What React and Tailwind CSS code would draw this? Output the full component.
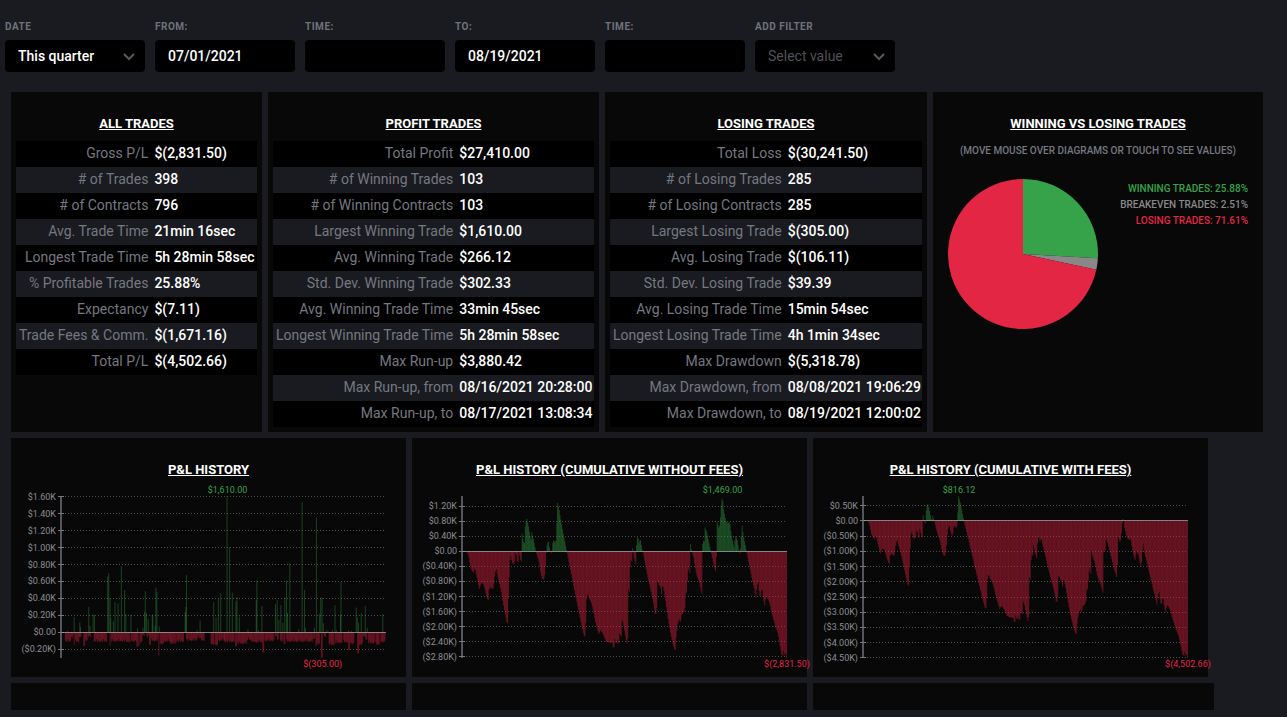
import React, { useState } from 'react';

const allTrades = [
    ['Gross P/L', '$(2,831.50)'],
    ['# of Trades', '398'],
    ['# of Contracts', '796'],
    ['Avg. Trade Time', '21min 16sec'],
    ['Longest Trade Time', '5h 28min 58sec'],
    ['% Profitable Trades', '25.88%'],
    ['Expectancy', '$(7.11)'],
    ['Trade Fees & Comm.', '$(1,671.16)'],
    ['Total P/L', '$(4,502.66)'],
];

const profitTrades = [
    ['Total Profit', '$27,410.00'],
    ['# of Winning Trades', '103'],
    ['# of Winning Contracts', '103'],
    ['Largest Winning Trade', '$1,610.00'],
    ['Avg. Winning Trade', '$266.12'],
    ['Std. Dev. Winning Trade', '$302.33'],
    ['Avg. Winning Trade Time', '33min 45sec'],
    ['Longest Winning Trade Time', '5h 28min 58sec'],
    ['Max Run-up', '$3,880.42'],
    ['Max Run-up, from', '08/16/2021 20:28:00'],
    ['Max Run-up, to', '08/17/2021 13:08:34'],
];

const losingTrades = [
    ['Total Loss', '$(30,241.50)'],
    ['# of Losing Trades', '285'],
    ['# of Losing Contracts', '285'],
    ['Largest Losing Trade', '$(305.00)'],
    ['Avg. Losing Trade', '$(106.11)'],
    ['Std. Dev. Losing Trade', '$39.39'],
    ['Avg. Losing Trade Time', '15min 54sec'],
    ['Longest Losing Trade Time', '4h 1min 34sec'],
    ['Max Drawdown', '$(5,318.78)'],
    ['Max Drawdown, from', '08/08/2021 19:06:29'],
    ['Max Drawdown, to', '08/19/2021 12:00:02'],
];

// Winning trades: [time slot, height], one height unit is $3.94
const wins = [
    [170, 4], [190, 45], [207, 30], [209, 15], [234, 76], [238, 19], [247, 54], [251, 52], [291, 167],
    [294, 177], [298, 103], [300, 43], [308, 32], [313, 90], [322, 87], [332, 198], [342, 127], [346, 55],
    [361, 54], [381, 12], [397, 14], [402, 61], [404, 123], [408, 58], [413, 40], [425, 54], [427, 49],
    [434, 19], [436, 134], [439, 121], [446, 17], [524, 61], [526, 76], [528, 171], [560, 6], [569, 35],
    [610, 90], [617, 45], [624, 100], [631, 116], [650, 408], [658, 256], [666, 118], [677, 92], [680, 106],
    [687, 47], [713, 9], [738, 97], [740, 156], [745, 6], [755, 79], [796, 84], [801, 96], [806, 37],
    [812, 81], [818, 28], [824, 105], [829, 154], [832, 58], [839, 207], [866, 10], [876, 390], [883, 127],
    [886, 12], [913, 14], [919, 344], [928, 55], [932, 103], [936, 105], [940, 27], [950, 6], [954, 4],
    [967, 7], [975, 81], [979, 7], [992, 54], [993, 151], [1016, 6], [1024, 4], [1039, 74], [1042, 45],
    [1046, 29], [1054, 57], [1066, 79], [1072, 13], [1119, 54],
];

// Losing trades: [from slot, to slot, depth]
const losses = [
    [166, 182, 28], [184, 190, 17], [192, 194, 38], [196, 206, 29], [208, 215, 15], [221, 224, 41],
    [226, 231, 24], [234, 242, 13], [252, 290, 28], [300, 302, 40], [304, 345, 27], [347, 360, 29],
    [364, 379, 27], [381, 384, 43], [387, 389, 41], [391, 396, 30], [398, 404, 10], [411, 416, 15],
    [419, 422, 38], [424, 445, 26], [447, 449, 70], [451, 461, 35], [464, 482, 28], [483, 500, 34],
    [501, 521, 28], [530, 560, 25], [563, 572, 18], [573, 585, 25], [604, 612, 36], [616, 624, 38],
    [627, 645, 25], [646, 675, 29], [678, 681, 42], [684, 712, 34], [714, 722, 22], [723, 731, 28],
    [733, 758, 30], [760, 764, 61], [766, 794, 26], [798, 802, 12], [804, 808, 22], [813, 822, 28],
    [824, 828, 35], [831, 912, 28], [914, 918, 20], [920, 923, 40], [925, 931, 34], [936, 939, 76],
    [944, 950, 14], [959, 975, 38], [978, 1000, 32], [1003, 1016, 30], [1018, 1022, 54], [1024, 1036, 34],
    [1045, 1048, 64], [1050, 1060, 38], [1063, 1068, 13], [1070, 1074, 22], [1078, 1096, 33],
    [1100, 1112, 37], [1115, 1128, 29],
];

// Running balance, [time slot, reading]. Zero is at 184 and a reading unit is $8.85
const balance = [
    [18, 184], [20, 187], [24, 196], [30, 230], [34, 242], [40, 248], [43, 232], [46, 248], [52, 275], [57, 298],
    [62, 280], [68, 280], [74, 300], [80, 325], [84, 331], [86, 298], [92, 290], [94, 297], [99, 296],
    [102, 265], [107, 234], [110, 250], [116, 275], [125, 320], [132, 360], [140, 400], [142, 400],
    [144, 330], [147, 250], [150, 190], [153, 208], [158, 224], [163, 218], [167, 180], [170, 213],
    [174, 218], [176, 178], [179, 205], [183, 215], [185, 128], [189, 155], [193, 160], [195, 110],
    [199, 82], [204, 105], [208, 130], [212, 150], [214, 124], [219, 145], [225, 175], [230, 195],
    [236, 215], [243, 255], [247, 268], [252, 268], [255, 240], [258, 190], [261, 162], [265, 152],
    [269, 180], [274, 194], [277, 160], [281, 148], [284, 160], [288, 150], [290, 90], [292, 38],
    [297, 60], [302, 90], [308, 125], [316, 165], [320, 185], [330, 235], [345, 310], [360, 385],
    [370, 430], [374, 447], [377, 400], [380, 312], [385, 318], [388, 330], [392, 333], [398, 355],
    [406, 395], [416, 433], [421, 420], [428, 430], [438, 455], [448, 458], [457, 458], [461, 482],
    [464, 445], [468, 465], [471, 448], [476, 470], [478, 428], [484, 440], [486, 390], [490, 400],
    [494, 425], [499, 455], [503, 470], [504, 290], [506, 300], [509, 310], [511, 200], [515, 220],
    [518, 170], [521, 200], [528, 224], [530, 160], [533, 135], [537, 160], [541, 145], [546, 175],
    [551, 195], [560, 245], [570, 290], [580, 335], [587, 380], [591, 350], [593, 270], [597, 285],
    [602, 290], [605, 313], [608, 282], [614, 310], [618, 340], [625, 390], [632, 430], [640, 465],
    [646, 485], [648, 450], [653, 405], [658, 385], [662, 402], [665, 375], [675, 362], [677, 315],
    [681, 305], [684, 250], [687, 225], [690, 250], [692, 160], [695, 180], [702, 205], [710, 255],
    [718, 275], [727, 315], [729, 138], [733, 165], [736, 112], [741, 125], [747, 155], [755, 190],
    [762, 225], [769, 250], [772, 95], [778, 115], [781, 100], [784, 50], [788, 18], [792, 60],
    [798, 90], [804, 100], [810, 95], [814, 125], [820, 160], [824, 175], [827, 135], [833, 150],
    [838, 180], [841, 195], [844, 160], [847, 102], [851, 135], [857, 165], [864, 200], [870, 230],
    [878, 270], [885, 300], [889, 325], [892, 290], [896, 275], [900, 320], [904, 315], [907, 290],
    [911, 325], [916, 348], [919, 318], [924, 325], [929, 335], [937, 370], [945, 400], [955, 430],
    [962, 470], [968, 503], [971, 480], [974, 500], [977, 485], [981, 504],
];

const TRADES = 398;
const FEES = 1671.16;

const historyBars = () => {
    const bars = wins.map(([x, h]) => ({ t: (x - 164) / 963, v: h * 3.94 }));
    losses.forEach(([from, to, depth], run) => {
        for (let x = from, n = run; x <= to; x += 2.5, n += 1) {
            const wobble = [0, -3, 1, -7, 0, 0, -2, 2][n % 8];
            bars.push({ t: (x - 166) / 963, v: -(depth + (to - from > 4 ? wobble : 0)) * 3.94 });
        }
    });
    return bars;
};

const balanceBars = (fees) => {
    const bars = [];
    let k = 0;
    for (let i = 0; i < TRADES; i += 1) {
        const t = i / (TRADES - 1);
        const x = 18 + t * 963;
        while (k < balance.length - 2 && balance[k + 1][0] < x) k += 1;
        const [x0, y0] = balance[k];
        const [x1, y1] = balance[k + 1];
        const y = y0 + ((y1 - y0) * (x - x0)) / (x1 - x0);
        bars.push({ t, v: (184 - y) * 8.85 - fees * t });
    }
    return bars;
};

const tickLabel = (v) => {
    if (v === 0) return '$0.00';
    const text = `$${(Math.abs(v) / 1000).toFixed(2)}K`;
    return v < 0 ? `(${text})` : text;
};

const LEFT = 54;
const RIGHT = 375;
const TOP = 17;
const BOTTOM = 179;

const Chart = ({ bars, max, min, step, maxLabel, minLabel }) => {
    const yOf = (v) => TOP + ((max - v) / (max - min)) * (BOTTOM - TOP);
    const xOf = (t) => LEFT + t * (RIGHT - LEFT - 1);
    const ticks = [];
    for (let v = Math.floor(max / step) * step; v >= min - step * 0.02; v -= step) ticks.push(v);
    const best = bars.reduce((a, b) => (b.v > a.v ? b : a));
    const worst = bars.reduce((a, b) => (b.v <= a.v ? b : a));

    return (
        <svg width="395" height="198" className="block overflow-visible font-[Roboto,sans-serif] text-[9px]">
            {ticks.map((v) => (
                <g key={v}>
                    <line x1={LEFT} x2={RIGHT} y1={Math.floor(yOf(v)) + 0.5} y2={Math.floor(yOf(v)) + 0.5} stroke="#4a4a4c" strokeDasharray="1 2" />
                    <text x="45" y={yOf(v) + 3} textAnchor="end" fill="#8b8d92">{tickLabel(v)}</text>
                </g>
            ))}
            {bars.map((b, i) => (
                <rect
                    key={i}
                    x={xOf(b.t)}
                    y={b.v > 0 ? yOf(b.v) : yOf(0)}
                    width="1"
                    height={Math.abs(yOf(b.v) - yOf(0))}
                    fill={b.v > 0 ? '#36a24a' : '#e42645'}
                    fillOpacity="0.38"
                />
            ))}
            <line x1="50" x2="50" y1={TOP} y2={BOTTOM} stroke="#55565c" strokeWidth="2" />
            {ticks.map((v) => (
                <line key={v} x1="47" x2="53" y1={Math.floor(yOf(v)) + 0.5} y2={Math.floor(yOf(v)) + 0.5} stroke="#77797f" />
            ))}
            <line x1="51" x2={RIGHT} y1={Math.floor(yOf(0)) + 0.5} y2={Math.floor(yOf(0)) + 0.5} stroke="#a3a3a8" strokeOpacity="0.75" />
            <text x={xOf(best.t) + 1} y="14" textAnchor="middle" fill="#36a24a">{maxLabel}</text>
            <text x={xOf(worst.t) + 1} y="188" textAnchor="middle" fill="#e42645">{minLabel}</text>
        </svg>
    );
};

const slice = (from, to, r) => {
    const point = (t) => `${r + r * Math.sin(t * 2 * Math.PI)} ${r - r * Math.cos(t * 2 * Math.PI)}`;
    return `M${r} ${r}L${point(from)}A${r} ${r} 0 ${to - from > 0.5 ? 1 : 0} 1 ${point(to)}Z`;
};

const Title = ({ children }) => (
    <h2 className="pt-[18px] text-center text-[13px] leading-[18px] font-bold text-white uppercase underline">{children}</h2>
);

const StatsCard = ({ title, rows, width }) => (
    <section className={`bg-[#080808] p-[5px] ${width}`}>
        <Title>{title}</Title>
        <table className="mt-2 w-full border-collapse text-sm whitespace-nowrap">
            <tbody>
                {rows.map(([label, value]) => (
                    <tr key={label} className="h-[26px] bg-black even:bg-[#1a1b20]">
                        <th scope="row" className="px-[3px] pb-[2px] text-right font-normal text-[#757881]">{label}</th>
                        <td className="w-full pb-[2px] pl-[3px] font-medium text-white">{value}</td>
                    </tr>
                ))}
            </tbody>
        </table>
    </section>
);

const ChartCard = ({ title, children }) => (
    <section className="w-[395px] bg-[#080808] pt-[5px]">
        <Title>{title}</Title>
        {children}
    </section>
);

const labelClass = 'mb-[6px] block text-[10px] leading-[14px] font-bold tracking-wider text-[#6f727a] uppercase';
const fieldClass = 'h-8 w-full appearance-none rounded bg-black px-[13px] text-sm font-medium text-white outline-none';

const TextField = ({ id, label, initial = '' }) => {
    const [value, setValue] = useState(initial);
    return (
        <div className="w-[140px]">
            <label htmlFor={id} className={labelClass}>{label}</label>
            <input id={id} type="text" value={value} onChange={(e) => setValue(e.target.value)} className={fieldClass} />
        </div>
    );
};

const SelectField = ({ id, label, options, muted }) => (
    <div className="w-[140px]">
        <label htmlFor={id} className={labelClass}>{label}</label>
        <div className="relative">
            <select id={id} className={muted ? `${fieldClass} font-normal! text-[#505258]!` : fieldClass}>
                {options.map((option) => (
                    <option key={option}>{option}</option>
                ))}
            </select>
            <svg width="12" height="8" viewBox="0 0 12 8" className="pointer-events-none absolute top-[13px] right-[10px]" fill="none" stroke="#55585f" strokeWidth="2">
                <path d="M1 1l5 5 5-5" />
            </svg>
        </div>
    </div>
);

const App = () => (
    <div className="h-screen bg-[#1a1b20] pb-[7px] font-[Roboto,sans-serif]">
        <main className="h-full overflow-y-auto [scrollbar-width:none]">
            <form className="flex flex-wrap gap-[10px] px-[5px] pt-5">
                <SelectField id="date" label="Date" options={['This quarter']} />
                <TextField id="from" label="From:" initial="07/01/2021" />
                <TextField id="from-time" label="Time:" />
                <TextField id="to" label="To:" initial="08/19/2021" />
                <TextField id="to-time" label="Time:" />
                <SelectField id="filter" label="Add filter" options={['Select value']} muted />
            </form>

            <div className="mt-5 flex flex-wrap gap-[6px] pl-[11px]">
                <StatsCard title="All trades" rows={allTrades} width="w-[251px]" />
                <StatsCard title="Profit trades" rows={profitTrades} width="w-[331px]" />
                <StatsCard title="Losing trades" rows={losingTrades} width="w-[322px]" />
                <section className="w-[330px] bg-[#080808] p-[5px]">
                    <Title>Winning vs losing trades</Title>
                    <p className="mt-2 text-center text-[10px] leading-5 font-medium text-[#757881] uppercase">
                        (Move mouse over diagrams or touch to see values)
                    </p>
                    <div className="mt-[18px] flex justify-between px-[10px]">
                        <svg width="150" height="150">
                            <path d={slice(0, 0.2588, 75)} fill="#36a24a" />
                            <path d={slice(0.2588, 0.2839, 75)} fill="#888888" />
                            <path d={slice(0.2839, 1, 75)} fill="#e42645" />
                        </svg>
                        <ul className="pt-[2px] text-right text-[10px] leading-4 font-medium uppercase">
                            <li className="text-[#36a24a]">Winning trades: 25.88%</li>
                            <li className="text-[#888888]">Breakeven trades: 2.51%</li>
                            <li className="text-[#e42645]">Losing trades: 71.61%</li>
                        </ul>
                    </div>
                </section>

                <ChartCard title="P&L history">
                    <Chart bars={historyBars()} max={1610} min={-305} step={200} maxLabel="$1,610.00" minLabel="$(305.00)" />
                </ChartCard>
                <ChartCard title="P&L history (cumulative without fees)">
                    <Chart bars={balanceBars(0)} max={1469} min={-2831.5} step={400} maxLabel="$1,469.00" minLabel="$(2,831.50)" />
                </ChartCard>
                <ChartCard title="P&L history (cumulative with fees)">
                    <Chart bars={balanceBars(FEES)} max={816.12} min={-4502.66} step={500} maxLabel="$816.12" minLabel="$(4,502.66)" />
                </ChartCard>

                <section className="h-[239px] w-[395px] bg-[#080808]" />
                <section className="h-[239px] w-[395px] bg-[#080808]" />
                <section className="h-[239px] w-[401px] bg-[#080808]" />
            </div>
        </main>
    </div>
);

export default App;
